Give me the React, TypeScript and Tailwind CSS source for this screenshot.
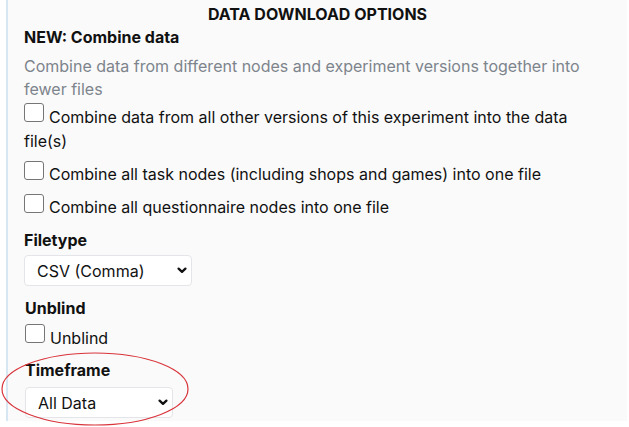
import React from "react";

const font = { fontFamily: "Inter, 'Noto Sans', sans-serif" };

function Box() {
  return (
    <span className="inline-block w-[20px] h-[19px] shrink-0 rounded-[3px] border border-[#767676] bg-white" />
  );
}

function Chevron() {
  return (
    <svg width="10" height="7" viewBox="0 0 10 7" className="shrink-0">
      <path d="M1.6 1.6 L5 4.9 L8.4 1.6" fill="none" stroke="#111" strokeWidth="2.3" strokeLinecap="round" strokeLinejoin="round" />
    </svg>
  );
}

function Select({ label, w }: { label: string; w: string }) {
  return (
    <div className={`${w} h-[31px] flex items-center justify-between pl-[12px] pr-[4px] bg-white border border-[#e3e5e8] rounded-[4px] text-[16px] text-[#111]`}>
      <span>{label}</span>
      <Chevron />
    </div>
  );
}

export default function App() {
  return (
    <div className="w-[629px] h-[427px] bg-white overflow-hidden" style={font}>
      <div className="ml-[6px] w-[621px] h-[421px] bg-[#fafafa] border-l-[2px] border-[#d6e6f2] relative">
        <div className="pl-[16px] text-[#111]">
          <div className="h-[26px] pt-[2px] leading-[24px] text-[16px] font-bold text-center pr-[16px]">
            DATA DOWNLOAD OPTIONS
          </div>
          <div className="h-[22px] leading-[22px] text-[16px] font-bold">NEW: Combine data</div>
          <div className="mt-[7px] text-[16px] leading-[23px] text-[#7d848c] pr-[30px]">
            Combine data from different nodes and experiment versions together into fewer files
          </div>
          <div className="mt-[4px] flex gap-[5px] items-start">
            <span className="mt-[-2px] inline-flex"><Box /></span>
            <span className="text-[16px] leading-[24px] -ml-[25px] indent-[25px] pr-[40px]">
              Combine data from all other versions of this experiment into the data file(s)
            </span>
          </div>
          <div className="mt-[9px] flex gap-[5px] items-start">
            <span className="mt-[-1px] inline-flex"><Box /></span>
            <span className="text-[16px] leading-[24px]">
              Combine all task nodes (including shops and games) into one file
            </span>
          </div>
          <div className="mt-[9px] flex gap-[5px] items-start">
            <span className="mt-[-1px] inline-flex"><Box /></span>
            <span className="text-[16px] leading-[24px]">Combine all questionnaire nodes into one file</span>
          </div>
          <div className="mt-[10px] h-[22px] leading-[22px] text-[16px] font-bold">Filetype</div>
          <div className="mt-[4px]">
            <Select label="CSV (Comma)" w="w-[168px]" />
          </div>
        </div>
        <div className="pl-[17px] text-[#111]">
          <div className="mt-[11px] h-[22px] leading-[22px] text-[16px] font-bold">Unblind</div>
          <div className="mt-[7px] flex gap-[5px] items-start">
            <span className="mt-[-2px] inline-flex"><Box /></span>
            <span className="text-[16px] leading-[24px]">Unblind</span>
          </div>
          <div className="mt-[9px] h-[22px] leading-[22px] text-[16px] font-bold">Timeframe</div>
          <div className="mt-[6px]">
            <Select label="All Data" w="w-[148px]" />
          </div>
        </div>
      </div>
      <svg className="absolute left-0 top-0 pointer-events-none" width="629" height="427">
        <ellipse cx="95" cy="389" rx="93" ry="36" fill="none" stroke="#d9343b" strokeWidth="1.2" />
      </svg>
    </div>
  );
}
